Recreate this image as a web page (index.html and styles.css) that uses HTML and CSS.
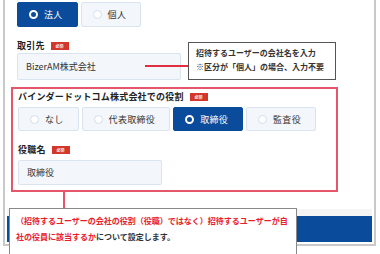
FILE: index.html
```html
<!DOCTYPE html>
<html lang="ja">

<head>
  <meta charset="UTF-8">
  <title>招待設定</title>
  <link rel="stylesheet" href="styles.css">
</head>

<body>
  <div class="frame">
    <div class="form">
      <div class="radios">
        <label class="radio selected"><span class="dot"></span>法人</label>
        <label class="radio"><span class="dot"></span>個人</label>
      </div>

      <p class="field-label">取引先<span class="badge">必須</span></p>
      <div class="input company">BizerAM株式会社</div>

      <div class="section">
        <p class="field-label first">バインダードットコム株式会社での役割<span class="badge">必須</span></p>
        <div class="radios tight">
          <label class="radio"><span class="dot"></span>なし</label>
          <label class="radio"><span class="dot"></span>代表取締役</label>
          <label class="radio selected"><span class="dot"></span>取締役</label>
          <label class="radio"><span class="dot"></span>監査役</label>
        </div>
        <p class="field-label">役職名<span class="badge">必須</span></p>
        <div class="input title">取締役</div>
      </div>
    </div>

    <div class="footer">
      <div class="submit"></div>
    </div>
  </div>

  <!-- annotations -->
  <span class="line line-company"></span>
  <div class="note note-company">
    <p>招待するユーザーの会社名を入力</p>
    <p>※区分が「個人」の場合、入力不要</p>
  </div>

  <span class="line line-role"></span>
  <div class="note note-role">
    <p class="em">（招待するユーザーの会社の役割（役職）ではなく）招待するユーザーが自</p>
    <p><span class="em">社の役員に該当するか</span>について設定します。</p>
  </div>
</body>

</html>
```

FILE: styles.css
```css
body {
  margin: 0;
  background: #fff;
  font-family: "Noto Sans CJK JP", "Noto Sans", sans-serif;
  color: #222;
  width: 380px;
  height: 254px;
  overflow: hidden;
  position: relative;
}
p {
  margin: 0;
}
.frame {
  margin-left: 3px;
  width: 369px;
  border: 2px solid #c9c9c9;
  border-top: none;
}
.form {
  padding: 2px 0 0 12px;
}
.radios {
  display: flex;
  gap: 3px;
  height: 25px;
}
.radios.tight {
  margin-top: 4px;
  height: 24px;
}
.radio {
  display: flex;
  align-items: center;
  gap: 6px;
  min-width: 60px;
  box-sizing: border-box;
  padding: 0 14px 0 11px;
  background: #f3f7fc;
  border: 1px solid #d9e4f0;
  border-radius: 2px;
  font-size: 9px;
  letter-spacing: 0.3px;
  color: #333;
}
.dot {
  width: 9px;
  height: 9px;
  box-sizing: border-box;
  border-radius: 50%;
  background: #fff;
  border: 1px solid #d3dde9;
}
.radio.selected {
  background: #0b4b9b;
  border-color: #0b4b9b;
  color: #fff;
}
.radio.selected .dot {
  border: 2.5px solid #fff;
  background: #0b4b9b;
}
.field-label {
  margin-top: 12px;
  display: flex;
  align-items: center;
  font-size: 9px;
  line-height: 13px;
  font-weight: bold;
  letter-spacing: 0.2px;
}
.field-label.first {
  margin-top: 0;
  line-height: 12px;
}
.badge {
  margin-left: 6px;
  width: 18px;
  height: 8px;
  background: #d2372b;
  color: #fff;
  font-size: 4px;
  line-height: 8px;
  text-align: center;
  letter-spacing: 0;
}
.input {
  margin-top: 1px;
  box-sizing: border-box;
  height: 27px;
  padding-left: 8px;
  display: flex;
  align-items: center;
  background: #f3f7fc;
  border: 1px solid #d9e4f0;
  border-radius: 2px;
  font-size: 9px;
  color: #333;
}
.input.company {
  width: 164px;
}
.input.title {
  margin-top: 4px;
  width: 144px;
  height: 25px;
}
.section {
  margin: 7px 0 0 -6px;
  width: 327px;
  box-sizing: border-box;
  border: 2px solid #e5566a;
  padding: 2px 0 5px 5px;
}
.footer {
  margin: 17px 2px 2px;
  padding-top: 7px;
  background: #f4f4f4;
}
.submit {
  height: 26px;
  background: #0b4b9b;
}
.line {
  position: absolute;
  background: #e0303f;
}
.line-company {
  left: 145px;
  top: 65px;
  width: 43px;
  height: 2px;
}
.line-role {
  left: 63px;
  top: 191px;
  width: 2px;
  height: 17px;
  background: #e5566a;
}
.note {
  position: absolute;
  box-sizing: border-box;
  background: #fff;
  font-size: 8px;
  font-weight: bold;
  color: #333;
  white-space: nowrap;
}
.note-company {
  left: 188px;
  top: 42px;
  width: 148px;
  height: 38px;
  border: 1px solid #555;
  padding: 3px 0 0 7px;
  line-height: 14px;
}
.note-role {
  left: 9px;
  top: 208px;
  width: 288px;
  height: 46px;
  border: 1px solid #888;
  border-bottom: none;
  padding: 4px 4px 0 6px;
  line-height: 15.5px;
}
.em {
  color: #e8202a;
}
```
